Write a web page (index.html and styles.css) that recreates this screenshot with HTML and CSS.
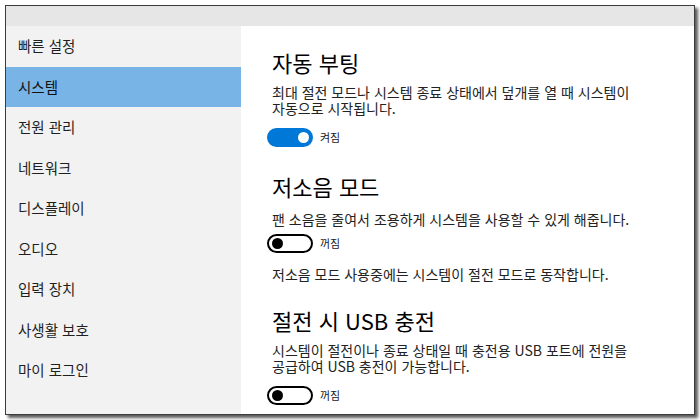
FILE: index.html
```html
<!DOCTYPE html>
<html lang="ko">
<head>
<meta charset="utf-8">
<title>시스템 설정</title>
<link rel="stylesheet" href="styles.css">
</head>
<body>
<div class="window">
  <div class="titlebar"></div>
  <div class="main">
    <nav class="sidebar">
      <div class="nav-item">빠른 설정</div>
      <div class="nav-item active">시스템</div>
      <div class="nav-item">전원 관리</div>
      <div class="nav-item">네트워크</div>
      <div class="nav-item">디스플레이</div>
      <div class="nav-item">오디오</div>
      <div class="nav-item">입력 장치</div>
      <div class="nav-item">사생활 보호</div>
      <div class="nav-item">마이 로그인</div>
    </nav>
    <div class="content">
      <section class="setting">
        <h2 class="setting-title">자동 부팅</h2>
        <p class="desc">최대 절전 모드나 시스템 종료 상태에서 덮개를 열 때 시스템이<br>자동으로 시작됩니다.</p>
        <div class="toggle-row">
          <span class="toggle on"><span class="knob"></span></span>
          <span class="toggle-label">켜짐</span>
        </div>
      </section>
      <section class="setting quiet">
        <h2 class="setting-title">저소음 모드</h2>
        <p class="desc">팬 소음을 줄여서 조용하게 시스템을 사용할 수 있게 해줍니다.</p>
        <div class="toggle-row">
          <span class="toggle off"><span class="knob"></span></span>
          <span class="toggle-label">꺼짐</span>
        </div>
        <p class="desc note">저소음 모드 사용중에는 시스템이 절전 모드로 동작합니다.</p>
      </section>
      <section class="setting usb">
        <h2 class="setting-title">절전 시 USB 충전</h2>
        <p class="desc">시스템이 절전이나 종료 상태일 때 충전용 USB 포트에 전원을<br>공급하여 USB 충전이 가능합니다.</p>
        <div class="toggle-row">
          <span class="toggle off"><span class="knob"></span></span>
          <span class="toggle-label">꺼짐</span>
        </div>
      </section>
    </div>
  </div>
</div>
</body>
</html>
```
FILE: styles.css
```css
* { box-sizing: border-box; }
html, body {
  margin: 0;
  padding: 0;
  background: #ffffff;
  width: 700px;
  height: 420px;
  overflow: hidden;
}
body {
  font-family: "Noto Sans CJK KR", "Noto Sans", sans-serif;
  color: #1a1a1a;
}
.window {
  margin: 5px 0 0 5px;
  width: 690px;
  height: 410px;
  border: 1px solid #3c3c3c;
  background: #ffffff;
  box-shadow: 3px 3px 3px rgba(0, 0, 0, 0.65);
  display: flex;
  flex-direction: column;
  overflow: hidden;
}
.titlebar {
  height: 20px;
  flex: none;
  background: #e6e6e6;
}
.main {
  flex: 1;
  display: flex;
  min-height: 0;
}
.sidebar {
  width: 235px;
  flex: none;
  background: #f2f2f2;
}
.nav-item {
  height: 40.5px;
  line-height: 40.5px;
  padding-left: 12px;
  font-size: 14.5px;
  color: #1f1f1f;
  white-space: nowrap;
}
.nav-item.active {
  background: #78b4e6;
  color: #111;
}
.content {
  flex: 1;
  padding: 22px 0 0 31px;
  background: #ffffff;
}
.setting + .setting {
  margin-top: 25px;
}
.setting.usb {
  margin-top: 24.5px;
}
.setting-title {
  margin: 0;
  font-size: 22px;
  font-weight: 400;
  line-height: 28px;
  color: #000;
  white-space: nowrap;
}
.desc {
  margin: 8px 0 0;
  font-size: 14px;
  line-height: 16px;
  color: #222;
  white-space: nowrap;
}
.quiet .desc {
  margin-top: 11px;
}
.quiet .desc.note {
  margin-top: 13px;
}
.toggle-row {
  margin-top: 12px;
  height: 19px;
  display: flex;
  align-items: center;
  gap: 7px;
  margin-left: -5px;
}
.quiet .toggle-row {
  margin-top: 6.5px;
}
.usb .toggle-row {
  margin-top: 11.5px;
}
.toggle {
  width: 46px;
  height: 19px;
  border-radius: 10px;
  border: 2px solid #000;
  display: flex;
  align-items: center;
  padding: 0 2.5px;
}
.toggle .knob {
  width: 11px;
  height: 11px;
  border-radius: 50%;
  background: #000;
}
.toggle.on {
  background: #0078d7;
  border-color: #0078d7;
  justify-content: flex-end;
}
.toggle.on .knob {
  background: #ffffff;
}
.toggle-label {
  font-size: 11px;
  color: #222;
  line-height: 19px;
}
```
